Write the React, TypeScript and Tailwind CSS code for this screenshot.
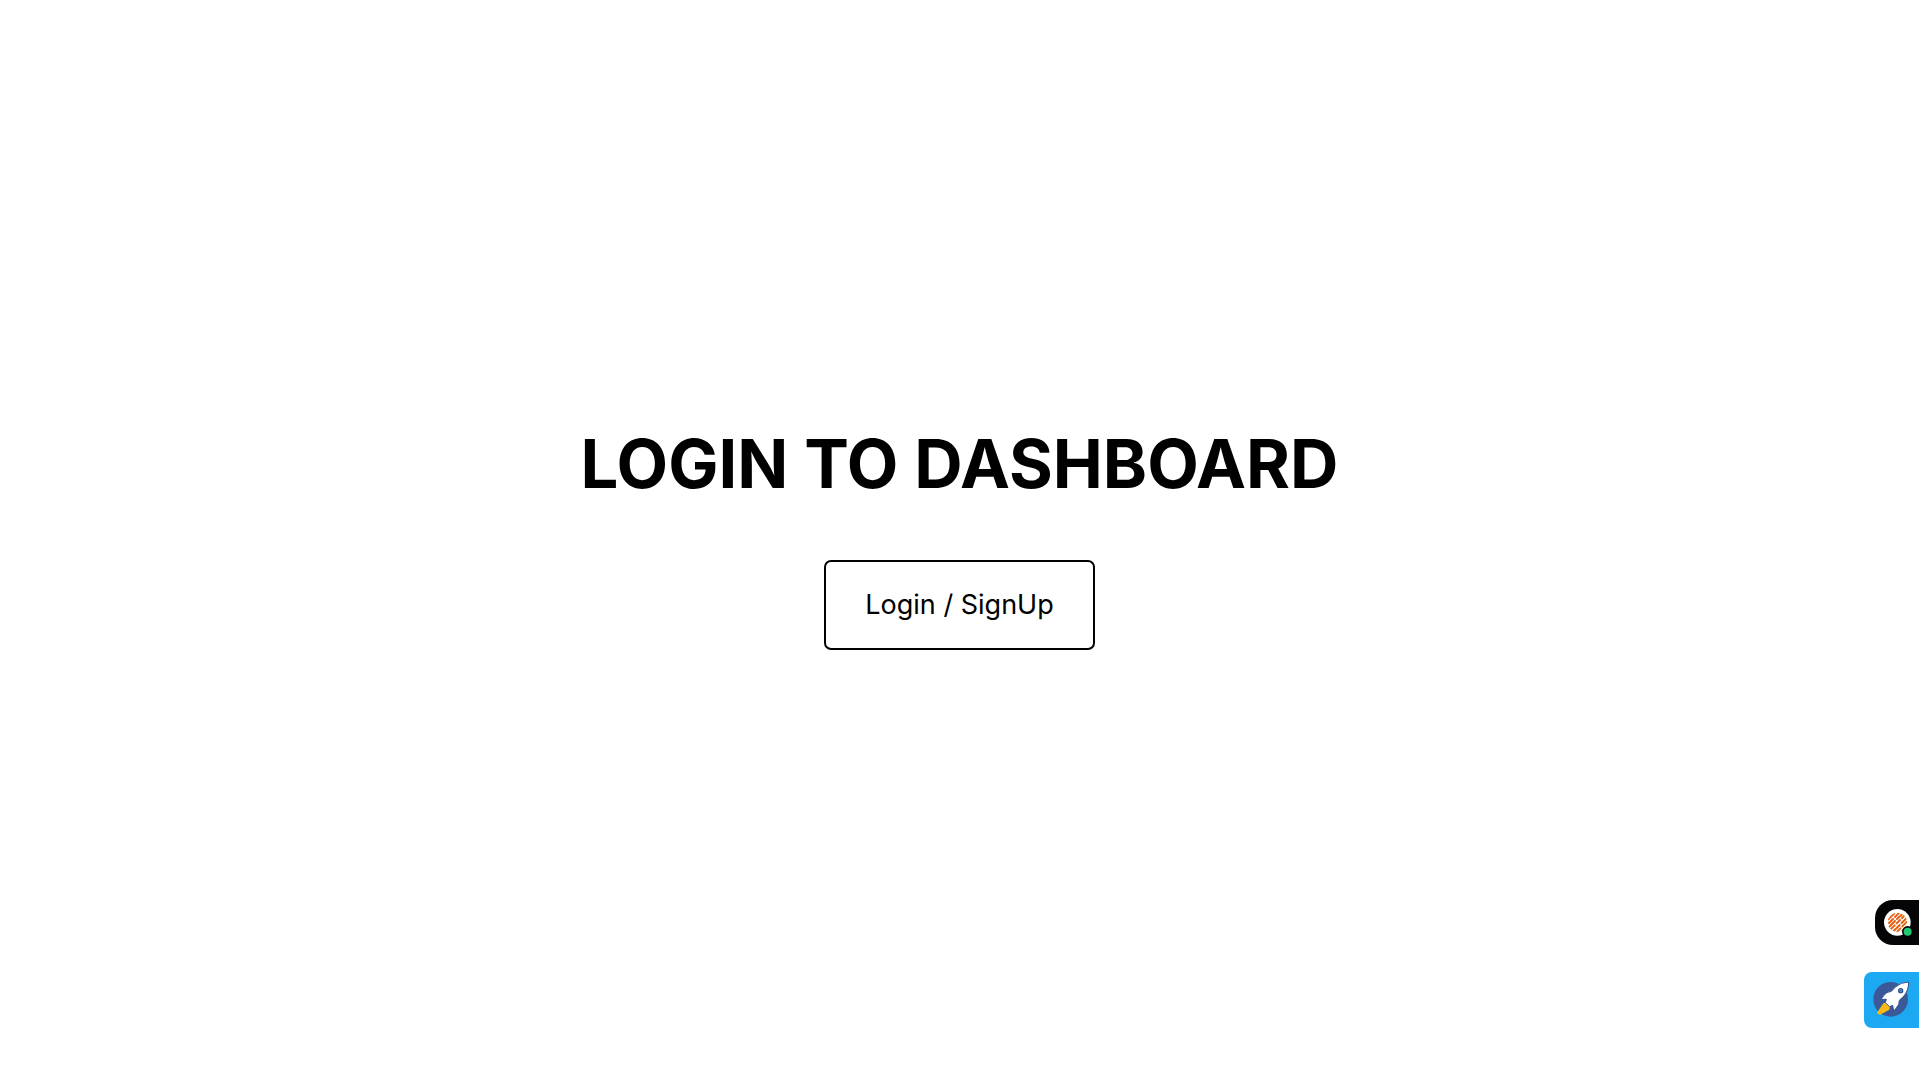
function AssistantIcon() {
  return (
    <svg viewBox="0 0 132 135" className="block h-[45px] w-11" aria-hidden="true">
      <circle cx="67" cy="67" r="40" fill="#fff" />
      <clipPath id="disc">
        <circle cx="67" cy="67" r="29" />
      </clipPath>
      <g clipPath="url(#disc)" stroke="#e8600f" strokeWidth="6" strokeLinecap="round">
        <path d="M40 58 58 40M42 69 54 57M60 51 73 38M42 81 60 63M66 57 83 41M49 86 59 76M65 70 75 60M81 54 91 44M56 93 74 75M80 69 96 53M67 95 76 85M82 79 96 65M80 95 96 79" />
      </g>
      <circle cx="98" cy="95" r="17" fill="#050507" />
      <circle cx="98" cy="95" r="12" fill="#22c872" />
    </svg>
  );
}

function RocketIcon() {
  return (
    <svg viewBox="15 21 165 168" className="block h-14 w-[55px]" aria-hidden="true">
      <circle cx="95" cy="103" r="52" fill="#3b5998" />
      <path d="M73 115 54 143Q57 149 63 149L91 134 94 120 84 112Z" fill="#fdbb14" />
      <path d="M77 120 61 146" stroke="#e8a51a" strokeWidth="2" />
      <path
        d="M149 51Q126 51 109 66L97 79Q83 79 73 93L66 103 82 103 79 113 92 125 101 121 104 138 112 129Q122 118 121 106L134 94Q149 77 149 51Z"
        fill="#fff"
        stroke="#34508d"
        strokeWidth="3"
        strokeLinejoin="round"
      />
      <circle cx="125" cy="77" r="6" fill="#4c92d0" stroke="#34508d" strokeWidth="4" />
    </svg>
  );
}

export default function App() {
  return (
    <div className="min-h-screen bg-white font-['Inter',sans-serif] text-black">
      <main className="flex min-h-screen flex-col items-center justify-center gap-[62px]">
        <h1 className="text-center text-[67px] leading-[68px] font-bold">LOGIN TO DASHBOARD</h1>
        <button type="button" className="rounded-[7px] border-2 border-black px-[39px] py-6 text-[27px] leading-[38px]">
          Login / SignUp
        </button>
      </main>
      <aside className="fixed right-0 bottom-[51px] flex flex-col items-end gap-[27px]">
        <button type="button" aria-label="Open assistant" className="rounded-l-[18px] bg-[#050507]">
          <AssistantIcon />
        </button>
        <button type="button" aria-label="Launch" className="rounded-l-lg bg-[#1da8f2]">
          <RocketIcon />
        </button>
      </aside>
    </div>
  );
}
